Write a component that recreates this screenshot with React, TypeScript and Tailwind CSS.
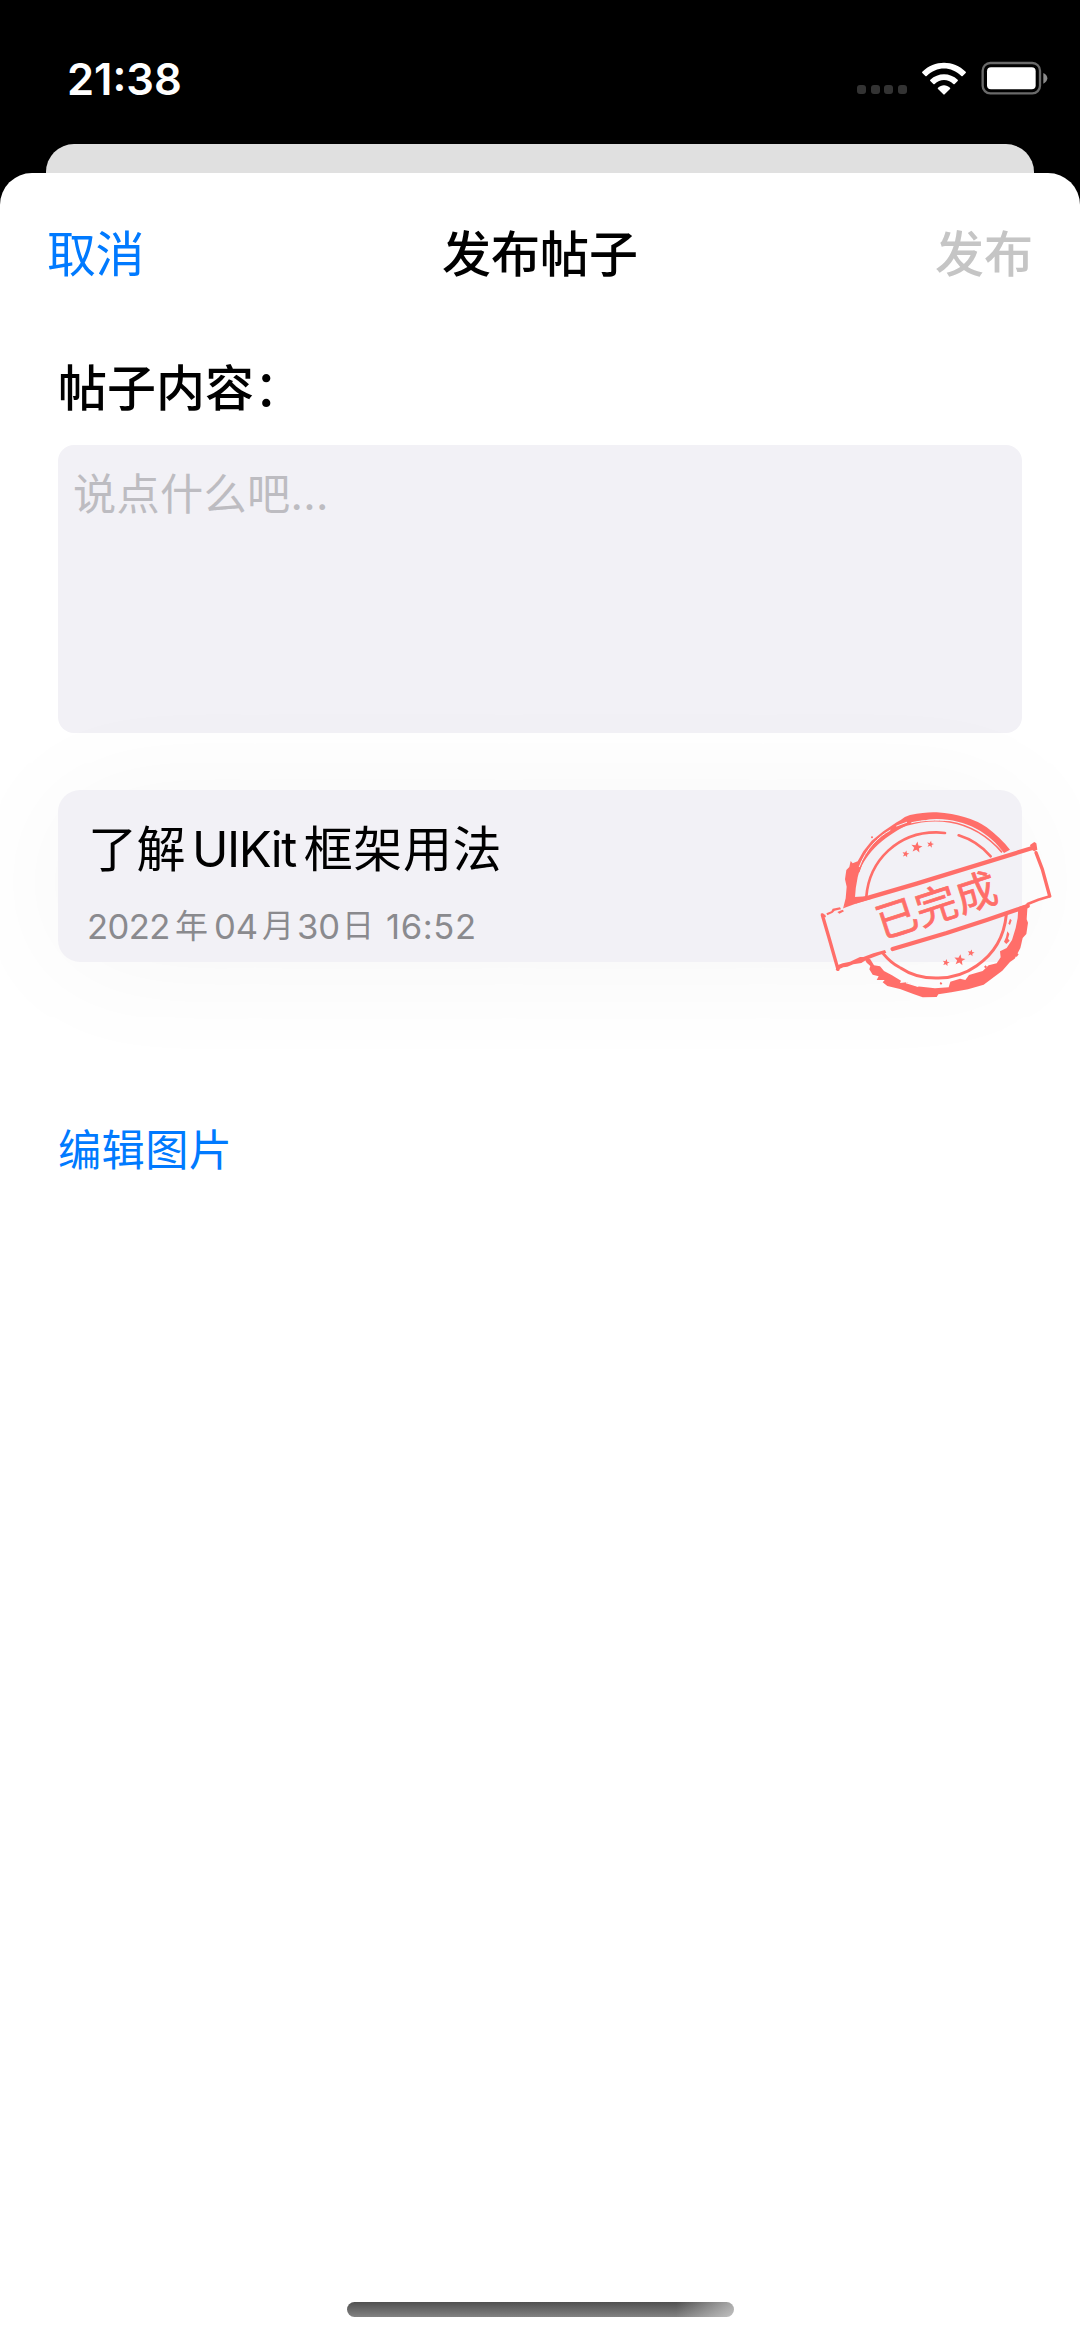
function StatusBar() {
  return (
    <div className="flex h-36 shrink-0 items-start justify-between pl-[67px] pr-[31px]">
      <div className="mt-[53px] text-[43.5px] font-semibold leading-[52px] text-white">21:38</div>
      <div className="mt-[61px] flex h-9 items-center">
        <div className="mt-[20px] flex gap-[4.6px]">
          <span className="h-[9px] w-[9px] rounded-[3px] bg-[#333]" />
          <span className="h-[9px] w-[9px] rounded-[3px] bg-[#333]" />
          <span className="h-[9px] w-[9px] rounded-[3px] bg-[#333]" />
          <span className="h-[9px] w-[9px] rounded-[3px] bg-[#333]" />
        </div>
        <svg className="-mt-px ml-[15px] h-9 w-11" viewBox="0 0 132 108" fill="#fff">
          <path d="M1 32C37-4 95-4 131 32q2 2 0 4l-9 9q-2 2-4 0C88 15 44 15 14 45q-2 2-4 0L1 36q-2-2 0-4Z" />
          <path d="M25 56C48 34 84 34 107 56q2 2 0 4L98 69q-2 2-4 0C78 53 54 53 38 69q-2 2-4 0L25 60q-2-2 0-4Z" />
          <path d="M48 80C58 70 74 70 84 80q2 2 0 4L68 100q-2 2-4 0L48 84q-2-2 0-4Z" />
        </svg>
        <svg className="ml-[15px] h-9 w-[68px]" viewBox="0 0 204 108">
          <rect x="5" y="6" width="172" height="91" rx="23" fill="none" stroke="#6a6a6a" strokeWidth="7" />
          <rect x="18" y="19" width="146" height="66" rx="12" fill="#fff" />
          <path d="M187 36q12 6 12 16t-12 16Z" fill="#8a8a8a" />
        </svg>
      </div>
    </div>
  );
}

const STAR = 'M0-10 2.6-3.4 9.5-3.1 4.1 1.3 5.9 8.1 0 4.2-5.9 8.1-4.1 1.3-9.5-3.1-2.6-3.4Z';

function DoneStamp() {
  return (
    <svg className="absolute left-[742px] top-0 h-[220px] w-[270px]" viewBox="0 0 810 660" fill="#ff6e69">
      {/* upper half of the worn outer ring */}
      <path d="M129 356 137 325 140 290 135 268 139 240 148 231 152 213 158 220 173 214 190 184 215 152 250 124 290 97 302 90 Q312 80 330 75 Q380 65 410 67 Q505 74 560 112 Q600 142 630 179L612 189C570 130 500 88 410 87 Q365 88 320 106 C245 145 190 195 173 262 Q166 295 165 322L146 334Z" />
      <path d="M176 246C196 175 248 127 320 105 365 92 410 89 450 96 510 106 565 140 606 187" fill="none" stroke="#ff6e69" strokeWidth="5" />
      <path d="M178 230C198 176 235 140 270 121M335 98C370 90 410 89 445 92M290 108 320 97" fill="none" stroke="#f3f2f7" strokeWidth="3" strokeLinecap="round" />
      <circle cx="216" cy="142" r="3" />
      <path d="M199 320C208 210 295 126 410 127L435 129M476 136C515 148 545 168 572 199" fill="none" stroke="#ff6e69" strokeWidth="8" strokeLinecap="round" />

      {/* banner outline */}
      <path d="M165 335 350 281 697 174" fill="none" stroke="#ff6e69" strokeWidth="13" />
      <path d="M130 355 150 322 200 319 215 326 175 338Z" />
      <path d="M690 165 703 156 709 160 712 179 702 184 694 178Z" />
      <path d="M708 188 727 238 749 318" fill="none" stroke="#ff6e69" strokeWidth="10" strokeLinecap="round" />
      <path d="M750 319 715 329 683 342" fill="none" stroke="#ff6e69" strokeWidth="8" strokeLinecap="round" />
      <path d="M278 477 440 429 560 390 683 348" fill="none" stroke="#ff6e69" strokeWidth="13" strokeLinecap="round" strokeLinejoin="round" />
      <path d="M67 375 87 443 114 538" fill="none" stroke="#ff6e69" strokeWidth="10" strokeLinecap="round" />
      <path d="M62 370 76 374 78 382 68 380ZM79 370 94 364 98 356 120 352 123 358 104 362 98 368 82 376ZM112 366 128 359 132 364 118 371Z" />
      <path d="M107 540 112 526 128 520 150 515 180 501 190 501 220 490 255 480 259 488 240 494 198 510 184 519 160 523 142 530 130 532 120 536 113 542Z" />

      {/* lower half of the rings */}
      <path d="M249 490Q272 518 297 531M302 534C365 577 465 574 530 527 585 490 613 435 619 374" fill="none" stroke="#ff6e69" strokeWidth="9" strokeLinecap="round" />
      <path d="M194 508 210 506 222 526 240 529 252 543 276 556 303 572 300 579 320 577 350 589 405 595 446 592 451 575 480 566 496 570 507 555 548 543 566 526 590 520 602 502 600 484 620 474 636 450 647 414 653 384 655 352 683 342 680 388 684 398 679 432 668 444 661 474 644 506 630 516 607 542 583 560 551 584 504 598 454 607 415 613 410 621 368 622 340 612 300 597 262 588 248 577 254 570 230 570 236 559 218 554 208 538 211 528 200 518Z" />
      <path d="M630 386 635 391 630 405 625 401ZM622 424 628 432 624 446 629 452 619 462 612 455 618 442ZM650 488 656 493 650 501 645 495ZM556 526 561 530 557 535 552 531ZM422 576 427 580 423 585 419 580Z" />
      <path d="M318 578 355 589" stroke="#fbfbfc" strokeWidth="4" />

      <path d={STAR} transform="translate(317 192) rotate(12) scale(1.1)" />
      <path d={STAR} transform="translate(350 172) rotate(8) scale(1.75)" />
      <path d={STAR} transform="translate(391 163) rotate(12) scale(1.1)" />
      <path d={STAR} transform="translate(438 518) rotate(12) scale(1.1)" />
      <path d={STAR} transform="translate(479 510) rotate(8) scale(1.75)" />
      <path d={STAR} transform="translate(513 489) rotate(12) scale(1.1)" />
      <text transform="translate(245 447) rotate(-18)" fontSize="124" fontWeight="400" stroke="#ff6e69" strokeWidth="2" letterSpacing="1">
        已完成
      </text>
    </svg>
  );
}

export default function App() {
  return (
    <div className='flex h-[2340px] w-[1080px] flex-col overflow-hidden bg-black font-["Inter","Noto_Sans_CJK_SC",sans-serif]'>
      <StatusBar />
      <div className="mx-[46px] h-[29px] shrink-0 rounded-t-[28px] bg-[#e0e0e0]" />
      <div className="flex grow flex-col bg-[linear-gradient(#000_0_40px,#fff_40px)]">
        <main className="flex grow flex-col rounded-t-[32px] bg-white">
          <header className="grid h-[163px] grid-cols-3 items-center px-[47px] text-[49px] leading-[60px]">
            <button className="text-left tracking-[-0.5px] text-[#007aff]">取消</button>
            <h1 className="text-center font-medium text-black">发布帖子</h1>
            <button className="text-right font-medium text-[#c5c5c5]">发布</button>
          </header>
          <section className="flex flex-col items-start px-[58px]">
            <h2 className="mt-[23px] text-[49px] font-medium leading-[60px] text-black">帖子内容：</h2>
            <div className="mt-[26px] h-[288px] w-full rounded-2xl bg-[#f2f1f6] px-[15px] pt-[23px] text-[43.2px] leading-[52px] tracking-[0.3px] text-[#bdbcc1]">
              说点什么吧...
            </div>
            <article className="relative mt-[57px] h-[172px] w-full rounded-[22px] bg-[#f2f1f6] pl-[29px] pt-[30px] shadow-[0_6px_130px_rgba(0,0,0,0.04)]">
              <p className="flex pl-px text-[49px] leading-[60px] text-black">
                <span className="tracking-[-0.5px]">了解</span>
                <span className="ml-[7px] mr-2 tracking-[-1.5px]">UIKit</span>
                <span className="tracking-[0.6px]">框架用法</span>
              </p>
              <p className="mt-[22px] grid grid-cols-[88px_39px_48px_35px_45px_44px_auto] justify-start whitespace-nowrap text-[34.6px] leading-[48px] text-[#8a8a8e]">
                <span className="tracking-[-0.6px]">2022</span>
                <span className="text-[33px]">年</span>
                <span>04</span>
                <span className="text-[32px]">月</span>
                <span>30</span>
                <span className="text-[32px]">日</span>
                <span className="tracking-[0.6px]">16:52</span>
              </p>
              <DoneStamp />
            </article>
            <button className="mt-[158px] text-[43.2px] leading-[60px] tracking-[0.4px] text-[#007aff]">编辑图片</button>
          </section>
          <div className="mx-auto mb-[23px] mt-auto h-[15px] w-[387px] rounded-full bg-[linear-gradient(90deg,transparent_85%,rgba(255,255,255,0.5)),linear-gradient(#505050,#828282)]" />
        </main>
      </div>
    </div>
  );
}
